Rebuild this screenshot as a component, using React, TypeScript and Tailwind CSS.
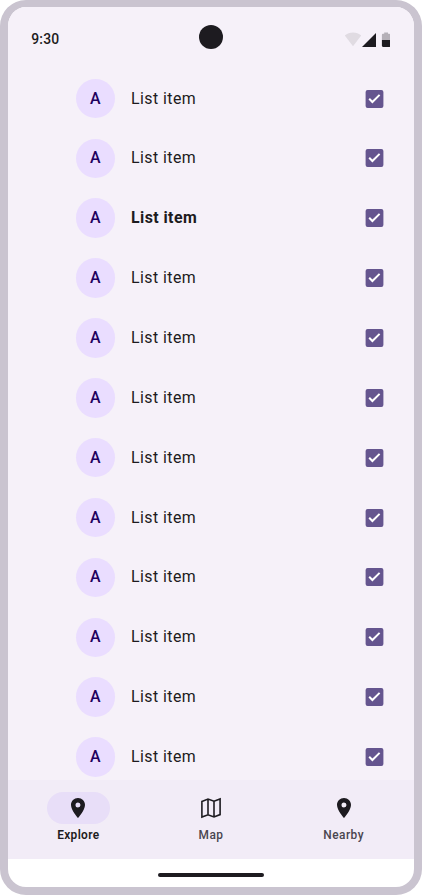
import React from "react";

const items = Array.from({ length: 12 }, (_, i) => ({ id: i, bold: i === 2 }));

function StatusBar() {
  return (
    <header className="relative flex h-[61.6px] shrink-0 items-center justify-between pt-[3px] pl-[23.3px] pr-6">
      <span className="text-[13.9px] leading-5 font-medium tracking-[0.14px] text-[#1d1b20]">9:30</span>
      <div className="absolute top-[17.8px] left-[190.8px] size-6 rounded-full bg-[#1d1b20]" />
      <svg className="h-[17px] w-[46px]" viewBox="0 0 46 17" fill="none">
        <path d="M9 15.3 0.8 4.6C3 2.7 5.9 1.6 9 1.6s6 1.1 8.2 3z" fill="#1d1b20" fillOpacity="0.1" />
        <path d="M18 15.9 32 1.9v14z" fill="#1d1b20" />
        <path d="M37.9 9V3.8q0-1.1 1.1-1.1h1.2V1.6h3.8v1.1h1.2q1.1 0 1.1 1.1V9z" fill="#1d1b20" fillOpacity="0.3" />
        <path d="M37.9 9h8.4v5.8q0 1.1-1.1 1.1H39q-1.1 0-1.1-1.1z" fill="#1d1b20" />
      </svg>
    </header>
  );
}

function ListItem({ bold }: { bold: boolean }) {
  return (
    <li className="flex h-[59.86px] shrink-0 items-center pr-[30px] pl-[67.7px]">
      <div className="flex size-[39.5px] items-center justify-center rounded-full bg-[#eaddff] text-[15.9px] leading-6 font-medium tracking-[0.15px] text-[#21005d]">
        A
      </div>
      <span className={`ml-[15.8px] flex-1 text-[15.9px] leading-6 tracking-[0.44px] text-[#1d1b20] ${bold ? "font-bold" : "font-normal"}`}>
        List item
      </span>
      <svg className="h-[18px] w-[19px]" viewBox="0 0 19 18" fill="none">
        <rect x="0.6" width="17.8" height="18" rx="2" fill="#65558f" />
        <path d="m4.2 8.8 3.2 3.2 7.2-7.1" stroke="white" strokeWidth="2" />
      </svg>
    </li>
  );
}

function PinIcon() {
  return (
    <svg className="size-6" viewBox="0 0 24 24" fill="#1d1b20">
      <path
        fillRule="evenodd"
        d="M12 2C8.13 2 5 5.13 5 9c0 5.25 7 13 7 13s7-7.75 7-13c0-3.87-3.13-7-7-7zm0 9.5a2.5 2.5 0 1 1 0-5 2.5 2.5 0 0 1 0 5z"
      />
    </svg>
  );
}

function MapIcon() {
  return (
    <svg className="size-6" viewBox="0 0 24 24" fill="none" stroke="#1d1b20" strokeWidth="1.6">
      <path d="M2.9 5.4 9 3l6 2.2L21.1 2.9v15.7L15 21l-6-2.2-6.1 2.3zM9 3v15.8M15 5.2V21" />
    </svg>
  );
}

function NavItem({ label, active = false, children }: { label: string; active?: boolean; children: React.ReactNode }) {
  return (
    <button className="flex flex-1 flex-col items-center gap-[3px]">
      <span className={`flex h-8 w-[63.4px] items-center justify-center rounded-full ${active ? "bg-[#e8def8]" : ""}`}>{children}</span>
      <span className={`text-[11.9px] leading-4 ${active ? "font-semibold tracking-[0.36px] text-[#1d1b20]" : "font-medium tracking-[0.46px] text-[#49454f]"}`}>
        {label}
      </span>
    </button>
  );
}

export default function App() {
  return (
    <div className="h-[895px] w-[422px] overflow-hidden bg-white font-[Roboto,sans-serif]">
      <div className="flex h-[894.5px] flex-col overflow-hidden rounded-[26px] border-x-8 border-t-[7px] border-b-8 border-[#cac4d0] bg-white">
        <div className="flex h-[773px] shrink-0 flex-col overflow-hidden bg-[#f6f1f9]">
          <StatusBar />
          <ul className="flex flex-col">
            {items.map((item) => (
              <ListItem key={item.id} bold={item.bold} />
            ))}
          </ul>
        </div>
        <nav className="flex h-[79px] shrink-0 items-start gap-2 bg-[#f2ecf7] px-2 pt-3">
          <NavItem label="Explore" active>
            <PinIcon />
          </NavItem>
          <NavItem label="Map">
            <MapIcon />
          </NavItem>
          <NavItem label="Nearby">
            <PinIcon />
          </NavItem>
        </nav>
        <div className="flex flex-1 justify-center pt-[14px] pr-[0.5px]">
          <div className="h-1 w-[106.5px] rounded-full bg-[#1d1b20]" />
        </div>
      </div>
    </div>
  );
}
